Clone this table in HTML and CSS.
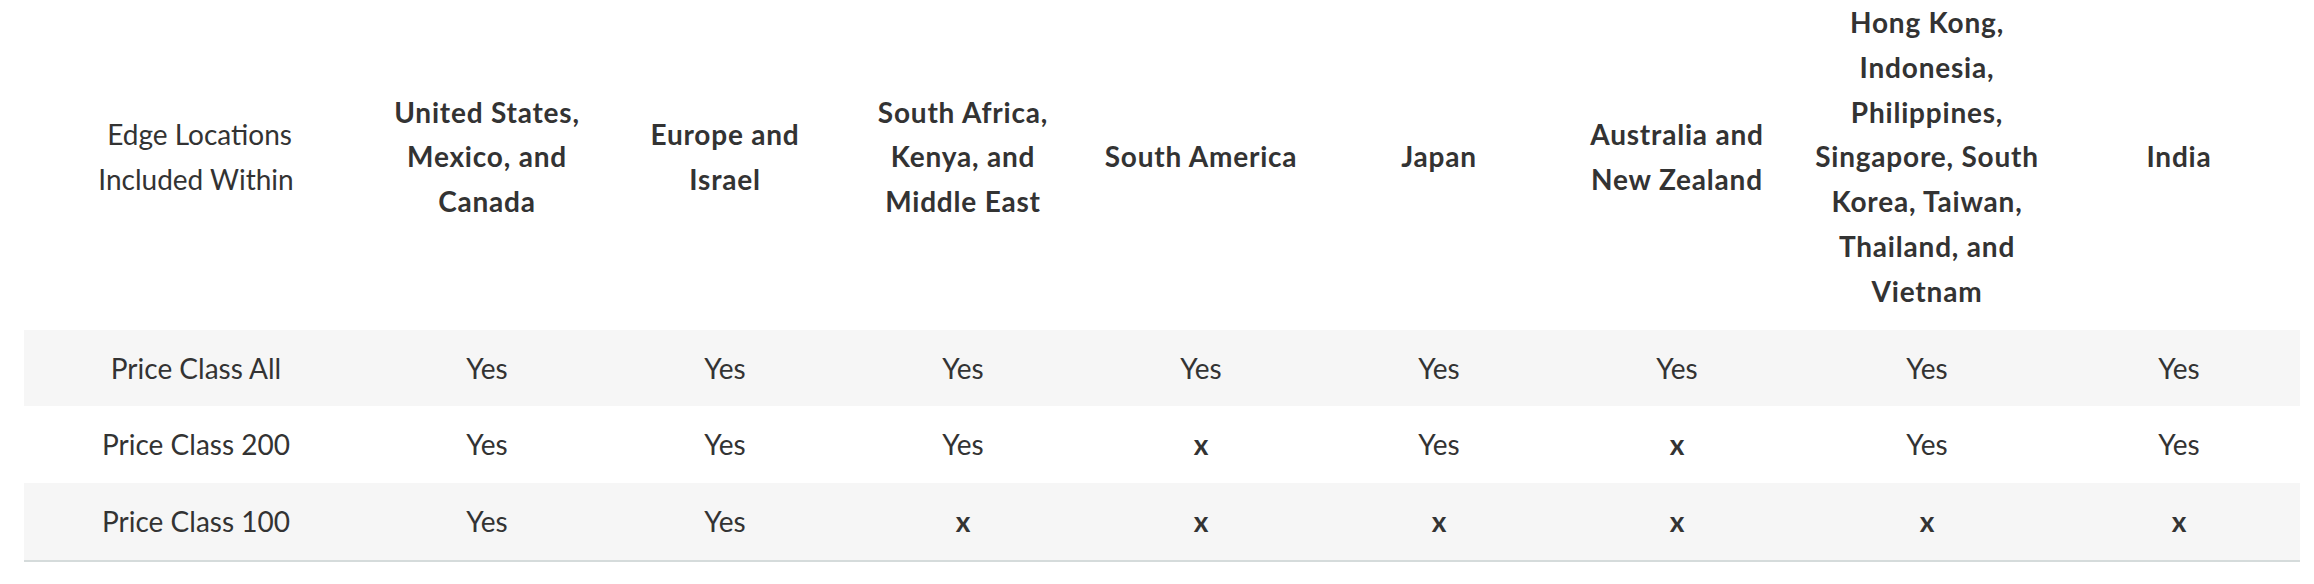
FILE: index.html
```html
<!DOCTYPE html>
<html lang="en">
<head>
<meta charset="utf-8">
<title>Price classes</title>
<link rel="stylesheet" href="styles.css">
</head>
<body>
<table class="price-table">
  <colgroup>
    <col class="c-first">
    <col class="c-std"><col class="c-std"><col class="c-std"><col class="c-std"><col class="c-std"><col class="c-std">
    <col class="c-asia">
    <col class="c-last">
  </colgroup>
  <thead>
    <tr>
      <th class="lead">&nbsp;Edge Locations<br>Included Within</th>
      <th>United States,<br>Mexico, and<br>Canada</th>
      <th>Europe and<br>Israel</th>
      <th>South Africa,<br>Kenya, and<br>Middle East</th>
      <th>South America</th>
      <th>Japan</th>
      <th>Australia and<br>New Zealand</th>
      <th>Hong Kong,<br>Indonesia,<br>Philippines,<br>Singapore, South<br>Korea, Taiwan,<br>Thailand, and<br>Vietnam</th>
      <th>India</th>
    </tr>
  </thead>
  <tbody>
    <tr>
      <td>Price Class All</td>
      <td>Yes</td><td>Yes</td><td>Yes</td><td>Yes</td><td>Yes</td><td>Yes</td><td>Yes</td><td>Yes</td>
    </tr>
    <tr>
      <td>Price Class 200</td>
      <td>Yes</td><td>Yes</td><td>Yes</td><td class="no">x</td><td>Yes</td><td class="no">x</td><td>Yes</td><td>Yes</td>
    </tr>
    <tr>
      <td>Price Class 100</td>
      <td>Yes</td><td>Yes</td><td class="no">x</td><td class="no">x</td><td class="no">x</td><td class="no">x</td><td class="no">x</td><td class="no">x</td>
    </tr>
  </tbody>
</table>
</body>
</html>
```

FILE: styles.css
```css
html, body {
  margin: 0;
  padding: 0;
  background: #ffffff;
}
body {
  padding-left: 24px;
  font-family: Lato, "Liberation Sans", Arial, sans-serif;
  color: #333333;
}
.price-table {
  border-collapse: collapse;
  table-layout: fixed;
  width: 2276px;
}
.c-first { width: 344px; }
.c-std { width: 238px; }
.c-asia { width: 262px; }
.c-last { width: 242px; }
.price-table th {
  font-size: 28px;
  line-height: 44.8px;
  font-weight: 700;
  letter-spacing: 0.8px;
  text-align: center;
  vertical-align: middle;
  padding: 0 8px 16px;
}
.price-table th.lead {
  font-weight: 400;
  letter-spacing: 0;
}
.price-table td {
  font-size: 28px;
  line-height: 44.8px;
  text-align: center;
  vertical-align: middle;
  padding: 16px 8px;
}
.price-table td.no {
  font-weight: 700;
}
.price-table tbody tr:nth-child(odd) {
  background: #f6f6f6;
}
.price-table tbody tr:last-child {
  border-bottom: 2px solid #d5dbdb;
}
```
